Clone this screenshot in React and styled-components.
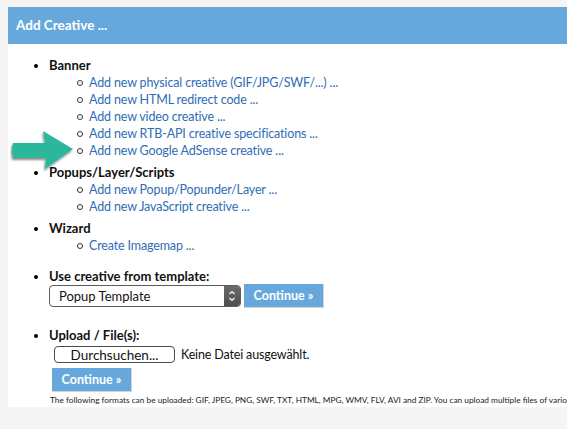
import React from 'react';
import styled, { createGlobalStyle } from 'styled-components';

const GlobalStyle = createGlobalStyle`
  html, body {
    margin: 0;
    padding: 0;
    background: #f5f5f5;
    overflow: hidden;
  }
  body {
    font-family: Lato, "Open Sans", sans-serif;
  }
`;

// page frame
const Page = styled.div`
  padding: 7px 0 0 8px;
  width: 760px;
`;

const Panel = styled.div`
  position: relative;
  background: #fff;
`;

const Header = styled.div`
  height: 37px;
  line-height: 37px;
  padding-left: 8px;
  background: #66a8db;
  color: #fff;
  font-weight: bold;
  font-size: 13.5px;
`;

const Body = styled.div`
  padding: 13px 0 1px 0;
`;

// lists
const MainList = styled.ul`
  margin: 0;
  padding-left: 41px;
  list-style: disc;
  font-size: 13px;
  line-height: 17px;
`;

const Group = styled.li`
  margin-bottom: ${(p) => p.gap || 0}px;
`;

const Label = styled.span`
  font-weight: bold;
  color: #111;
`;

const SubList = styled.ul`
  margin: 0;
  padding-left: 40px;
  list-style: none;
`;

// hollow circle bullet
const SubItem = styled.li`
  position: relative;
  &::before {
    content: '';
    position: absolute;
    left: -12px;
    top: 6px;
    width: 4px;
    height: 4px;
    border: 1px solid #333;
    border-radius: 50%;
  }
`;

const Link = styled.a`
  color: #2f6db5;
  text-decoration: none;
  cursor: pointer;
  font-size: 12.5px;
  letter-spacing: -0.15px;
`;

// forms
const Row = styled.div`
  display: flex;
  align-items: center;
  gap: ${(p) => p.gap || 4}px;
  margin-top: ${(p) => p.top || 0}px;
  padding-left: ${(p) => p.indent || 0}px;
`;

const SelectBox = styled.div`
  display: flex;
  width: 192px;
  height: 22px;
  box-sizing: border-box;
  border: 1px solid #5c5c5c;
  border-radius: 4px;
  overflow: hidden;
  font-size: 13px;
  color: #111;
`;

const SelectText = styled.div`
  flex: 1;
  padding-left: 9px;
  line-height: 20px;
`;

const SelectArrow = styled.div`
  width: 16px;
  background: linear-gradient(#6a6a6a, #4e4e4e);
  display: flex;
  align-items: center;
  justify-content: center;
`;

const Button = styled.button`
  width: ${(p) => p.w || 80}px;
  height: 24px;
  padding: 0;
  border: none;
  border-right: 1px solid #d4d4d4;
  border-bottom: 1px solid #d4d4d4;
  background: #66a8db;
  color: #fff;
  font-family: Lato, "Open Sans", sans-serif;
  font-weight: bold;
  font-size: 12.5px;
`;

const FileButton = styled.button`
  width: 121px;
  height: 17px;
  padding: 0;
  box-sizing: border-box;
  border: 1px solid #4a4a4a;
  border-radius: 4px;
  background: #fff;
  color: #111;
  font-family: Lato, "Open Sans", sans-serif;
  font-size: 13.5px;
  line-height: 14px;
`;

const FileText = styled.span`
  font-size: 12.5px;
  letter-spacing: -0.15px;
  color: #111;
`;

const Note = styled.div`
  margin: 3px 0 0 1px;
  font-size: 8.3px;
  line-height: 11px;
  color: #222;
  white-space: nowrap;
`;

const ArrowSvg = styled.svg`
  position: absolute;
  left: 2px;
  top: 120px;
`;

function Pointer() {
  return (
    <ArrowSvg width="70" height="50" viewBox="0 0 70 50">
      <defs>
        <filter id="sh" x="-20%" y="-20%" width="140%" height="150%">
          <feDropShadow dx="-1" dy="2" stdDeviation="1.2" floodColor="#000" floodOpacity="0.45" />
        </filter>
      </defs>
      <path
        d="M3 16 L35 16 L33 4 L63 22 L35 42 L36 31 L3 31 Q1 23.5 3 16 Z"
        fill="#2bb79b"
        filter="url(#sh)"
      />
    </ArrowSvg>
  );
}

function Chevrons() {
  return (
    <svg width="8" height="14" viewBox="0 0 8 14">
      <path d="M1.5 5 L4 2.5 L6.5 5 M1.5 9 L4 11.5 L6.5 9" stroke="#fff" strokeWidth="1.2" fill="none" />
    </svg>
  );
}

export default function App() {
  return (
    <>
      <GlobalStyle />
      <Page>
        <Panel>
          <Header>Add Creative ...</Header>
          <Body>
            <MainList>
              <Group gap={5}>
                <Label>Banner</Label>
                <SubList>
                  <SubItem><Link>Add new physical creative (GIF/JPG/SWF/...) ...</Link></SubItem>
                  <SubItem><Link>Add new HTML redirect code ...</Link></SubItem>
                  <SubItem><Link>Add new video creative ...</Link></SubItem>
                  <SubItem><Link>Add new RTB-API creative specifications ...</Link></SubItem>
                  <SubItem><Link>Add new Google AdSense creative ...</Link></SubItem>
                </SubList>
              </Group>
              <Group gap={5}>
                <Label>Popups/Layer/Scripts</Label>
                <SubList>
                  <SubItem><Link>Add new Popup/Popunder/Layer ...</Link></SubItem>
                  <SubItem><Link>Add new JavaScript creative ...</Link></SubItem>
                </SubList>
              </Group>
              <Group gap={14}>
                <Label>Wizard</Label>
                <SubList>
                  <SubItem><Link>Create Imagemap ...</Link></SubItem>
                </SubList>
              </Group>
              <Group gap={19}>
                <Label>Use creative from template:</Label>
                <Row top={-1} gap={3}>
                  <SelectBox>
                    <SelectText>Popup Template</SelectText>
                    <SelectArrow><Chevrons /></SelectArrow>
                  </SelectBox>
                  <Button w={80}>Continue »</Button>
                </Row>
              </Group>
              <Group>
                <Label>Upload / File(s):</Label>
                <Row top={2} gap={6} indent={5}>
                  <FileButton>Durchsuchen...</FileButton>
                  <FileText>Keine Datei ausgewählt.</FileText>
                </Row>
                <Row top={5} indent={3}>
                  <Button w={80}>Continue »</Button>
                </Row>
                <Note>
                  The following formats can be uploaded: GIF, JPEG, PNG, SWF, TXT, HTML, MPG, WMV, FLV, AVI and ZIP. You can upload multiple files of various types at once.
                </Note>
              </Group>
            </MainList>
            <Pointer />
          </Body>
        </Panel>
      </Page>
    </>
  );
}
